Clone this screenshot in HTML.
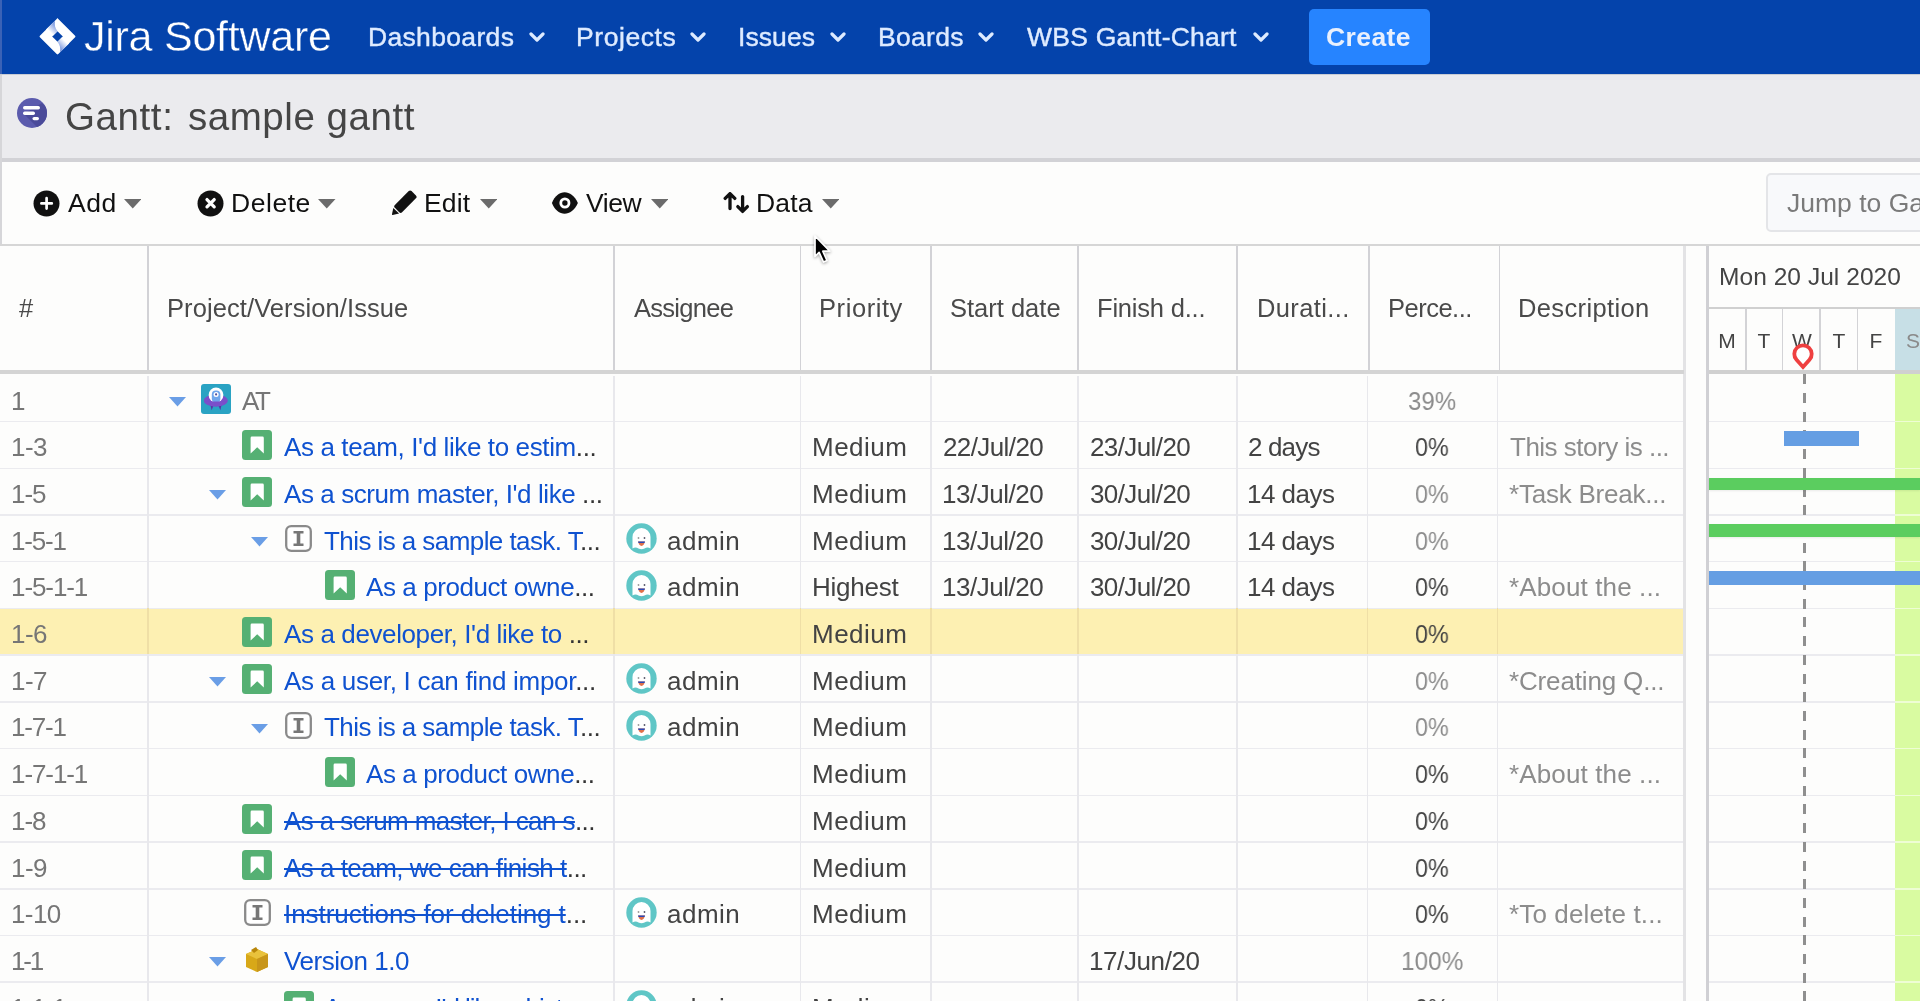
<!DOCTYPE html>
<html><head><meta charset="utf-8"><style>
html,body{margin:0;padding:0;width:1920px;height:1001px;overflow:hidden;background:#fdfdfc;font-family:"Liberation Sans", sans-serif;}
.t{position:absolute;white-space:nowrap;line-height:normal;font-family:"Liberation Sans", sans-serif;will-change:transform;}
.r{position:absolute;}
</style></head><body>
<div class="r" style="left:0px;top:0px;width:1920px;height:74px;background:#0443ab;"></div>
<div class="r" style="left:0px;top:0px;width:2px;height:74px;background:#3a62b6;"></div>
<div class="r" style="left:0px;top:74px;width:2px;height:172px;background:#d6d6d9;"></div>
<div class="r" style="left:0px;top:74px;width:1920px;height:1px;background:#c8ccd4;"></div>
<svg class="r" style="left:38px;top:17px" width="39" height="39" viewBox="0 0 39 39">
<defs>
<linearGradient id="lg1" gradientUnits="userSpaceOnUse" x1="18" y1="7" x2="11" y2="14"><stop offset="0" stop-color="#6f8fdc"/><stop offset="1" stop-color="#ffffff"/></linearGradient>
<linearGradient id="lg2" gradientUnits="userSpaceOnUse" x1="21" y1="32" x2="28" y2="25"><stop offset="0" stop-color="#6f8fdc"/><stop offset="1" stop-color="#ffffff"/></linearGradient>
</defs>
<path d="M19.5 1.1 Q19.5 1.1 20.3 1.9 L37.1 18.7 Q37.9 19.5 37.1 20.3 L20.3 37.1 Q19.5 37.9 18.7 37.1 L1.9 20.3 Q1.1 19.5 1.9 18.7 L18.7 1.9 Z" fill="#fff"/>
<path d="M19.5 14.2 L24.8 19.5 L19.5 24.8 L14.2 19.5 Z" fill="#0443ab"/>
<path d="M16.9 3.7 C16.4 8 17 11 19.5 14.2 L15 18.7 L8 12.6 Z" fill="url(#lg1)"/>
<path d="M22.1 35.3 C22.6 31 22 28 19.5 24.8 L24 20.3 L31 26.4 Z" fill="url(#lg2)"/>
</svg>
<div class="t" style="left:84.00px;top:12.09px;font-size:43px;color:#ffffff;font-weight:400;letter-spacing:-0.250px;-webkit-text-stroke:0.4px #0443ab">Jira Software</div>
<div class="t" style="left:368.00px;top:22.02px;font-size:26.5px;color:#deebff;font-weight:400;letter-spacing:0.333px;-webkit-text-stroke:0.4px #deebff">Dashboards</div>
<svg class="r" style="left:529px;top:32px" width="16" height="10" viewBox="0 0 16 10"><path d="M2 2 L8 8 L14 2" fill="none" stroke="#deebff" stroke-width="3.2" stroke-linecap="round" stroke-linejoin="round"/></svg>
<div class="t" style="left:576.00px;top:22.02px;font-size:26.5px;color:#deebff;font-weight:400;letter-spacing:0.571px;-webkit-text-stroke:0.4px #deebff">Projects</div>
<svg class="r" style="left:690px;top:32px" width="16" height="10" viewBox="0 0 16 10"><path d="M2 2 L8 8 L14 2" fill="none" stroke="#deebff" stroke-width="3.2" stroke-linecap="round" stroke-linejoin="round"/></svg>
<div class="t" style="left:738.30px;top:22.02px;font-size:26.5px;color:#deebff;font-weight:400;letter-spacing:0.080px;-webkit-text-stroke:0.4px #deebff">Issues</div>
<svg class="r" style="left:830px;top:32px" width="16" height="10" viewBox="0 0 16 10"><path d="M2 2 L8 8 L14 2" fill="none" stroke="#deebff" stroke-width="3.2" stroke-linecap="round" stroke-linejoin="round"/></svg>
<div class="t" style="left:878.00px;top:22.02px;font-size:26.5px;color:#deebff;font-weight:400;letter-spacing:0.300px;-webkit-text-stroke:0.4px #deebff">Boards</div>
<svg class="r" style="left:978px;top:32px" width="16" height="10" viewBox="0 0 16 10"><path d="M2 2 L8 8 L14 2" fill="none" stroke="#deebff" stroke-width="3.2" stroke-linecap="round" stroke-linejoin="round"/></svg>
<div class="t" style="left:1027.00px;top:22.02px;font-size:26.5px;color:#deebff;font-weight:400;letter-spacing:0.236px;-webkit-text-stroke:0.4px #deebff">WBS Gantt-Chart</div>
<svg class="r" style="left:1252.5px;top:32px" width="16" height="10" viewBox="0 0 16 10"><path d="M2 2 L8 8 L14 2" fill="none" stroke="#deebff" stroke-width="3.2" stroke-linecap="round" stroke-linejoin="round"/></svg>
<div class="r" style="left:1309px;top:9px;width:121px;height:56px;background:#2684ff;border-radius:5px"></div>
<div class="t" style="left:1326.00px;top:22.32px;font-size:26.5px;color:#e9f0fd;font-weight:700;letter-spacing:0.400px;">Create</div>
<div class="r" style="left:2px;top:75px;width:1918px;height:83px;background:#ebebee;"></div>
<div class="r" style="left:2px;top:158px;width:1918px;height:4px;background:#d2d2d6;"></div>
<svg class="r" style="left:16px;top:97px" width="32" height="32" viewBox="0 0 32 32">
<defs><clipPath id="cc"><circle cx="16" cy="16" r="15"/></clipPath></defs>
<circle cx="16" cy="16" r="15" fill="#5b5bad"/>
<path d="M8 17 L28 37 L40 20 L26 6 Z" fill="#4b4b9a" clip-path="url(#cc)"/>
<rect x="7" y="9" width="17" height="3.4" rx="1.7" fill="#fff"/>
<rect x="7" y="14.6" width="12" height="3.4" rx="1.7" fill="#fff"/>
<rect x="16.5" y="20" width="6.5" height="3.2" rx="1.6" fill="#fff"/>
</svg>
<div class="t" style="left:65.00px;top:94.66px;font-size:38.5px;color:#454545;font-weight:400;letter-spacing:0.600px;">Gantt:</div>
<div class="t" style="left:188.00px;top:94.66px;font-size:38.5px;color:#454545;font-weight:400;letter-spacing:0.545px;">sample gantt</div>
<div class="r" style="left:2px;top:162px;width:1918px;height:82px;background:#fdfdfc;"></div>
<div class="r" style="left:0px;top:244px;width:1920px;height:2px;background:#d6d6d6;"></div>
<svg class="r" style="left:33px;top:189.5px" width="27" height="27" viewBox="0 0 27 27"><circle cx="13.5" cy="13.5" r="13" fill="#111"/><path d="M13.6 8.2 V18.6 M8.4 13.4 H18.8" stroke="#fff" stroke-width="2.7" stroke-linecap="round"/></svg>
<div class="t" style="left:67.50px;top:188.02px;font-size:26.5px;color:#111111;font-weight:400;letter-spacing:0.500px;">Add</div>
<svg class="r" style="left:123.5px;top:199px" width="17.5" height="9.5" viewBox="0 0 17.5 9.5"><path d="M0 0 L17.5 0 L8.75 9.5 Z" fill="#6b6b6b"/></svg>
<svg class="r" style="left:197px;top:189.5px" width="27" height="27" viewBox="0 0 27 27"><circle cx="13.5" cy="13.5" r="13" fill="#111"/><path d="M10 9.6 L17.2 16.8 M17.2 9.6 L10 16.8" stroke="#fff" stroke-width="3.3" stroke-linecap="round"/></svg>
<div class="t" style="left:230.50px;top:188.02px;font-size:26.5px;color:#111111;font-weight:400;letter-spacing:0.540px;">Delete</div>
<svg class="r" style="left:318px;top:199px" width="17.5" height="9.5" viewBox="0 0 17.5 9.5"><path d="M0 0 L17.5 0 L8.75 9.5 Z" fill="#6b6b6b"/></svg>
<svg class="r" style="left:391px;top:190px" width="28" height="27" viewBox="0 0 28 27"><rect x="-11.8" y="-5.1" width="23.6" height="10.2" rx="2" fill="#111" transform="translate(14.4 11.65) rotate(-45)"/><path d="M2.3 17.9 L8.1 23.5 L1.6 24.9 Q0.9 25 1 24.3 Z" fill="#111"/></svg>
<div class="t" style="left:424.00px;top:188.02px;font-size:26.5px;color:#111111;font-weight:400;letter-spacing:0.167px;">Edit</div>
<svg class="r" style="left:479.5px;top:199px" width="17.5" height="9.5" viewBox="0 0 17.5 9.5"><path d="M0 0 L17.5 0 L8.75 9.5 Z" fill="#6b6b6b"/></svg>
<svg class="r" style="left:551px;top:191.5px" width="28" height="22" viewBox="0 0 28 22"><path d="M0.9 11 C6.5 -3.2 20.5 -3.2 26.9 11 C20.5 25.2 6.5 25.2 0.9 11 Z" fill="#111"/><circle cx="13.9" cy="11" r="5.5" fill="#fff"/><circle cx="13.9" cy="11" r="2.7" fill="#111"/></svg>
<div class="t" style="left:585.50px;top:188.02px;font-size:26.5px;color:#111111;font-weight:400;letter-spacing:-0.433px;">View</div>
<svg class="r" style="left:650.5px;top:199px" width="17.5" height="9.5" viewBox="0 0 17.5 9.5"><path d="M0 0 L17.5 0 L8.75 9.5 Z" fill="#6b6b6b"/></svg>
<svg class="r" style="left:723px;top:192px" width="28" height="23" viewBox="0 0 28 23"><path d="M7 2 V16.6 M2.2 6.4 L7 1.6 L11.8 6.4" fill="none" stroke="#111" stroke-width="3.3" stroke-linecap="round" stroke-linejoin="round"/><path d="M19.6 4.6 V18.8 M14.8 14.6 L19.6 19.4 L24.4 14.6" fill="none" stroke="#111" stroke-width="3.3" stroke-linecap="round" stroke-linejoin="round"/></svg>
<div class="t" style="left:756.00px;top:188.02px;font-size:26.5px;color:#111111;font-weight:400;letter-spacing:0.167px;">Data</div>
<svg class="r" style="left:821.5px;top:199px" width="17.5" height="9.5" viewBox="0 0 17.5 9.5"><path d="M0 0 L17.5 0 L8.75 9.5 Z" fill="#6b6b6b"/></svg>
<div class="r" style="left:1766px;top:173px;width:170px;height:59px;background:#f8f9fb;border:2px solid #e4e5e8;border-radius:5px;box-sizing:border-box"></div>
<div class="t" style="left:1787.00px;top:188.02px;font-size:26.5px;color:#7a7a7a;font-weight:400;letter-spacing:0.000px;">Jump to Gantt</div>
<div class="r" style="left:0px;top:246px;width:1683px;height:124px;background:#fdfdfc;"></div>
<div class="r" style="left:147.25px;top:246px;width:1.5px;height:125px;background:#d2d2d6;"></div>
<div class="r" style="left:613.25px;top:246px;width:1.5px;height:125px;background:#d2d2d6;"></div>
<div class="r" style="left:799.95px;top:246px;width:1.5px;height:125px;background:#d2d2d6;"></div>
<div class="r" style="left:930.25px;top:246px;width:1.5px;height:125px;background:#d2d2d6;"></div>
<div class="r" style="left:1077.45px;top:246px;width:1.5px;height:125px;background:#d2d2d6;"></div>
<div class="r" style="left:1236.25px;top:246px;width:1.5px;height:125px;background:#d2d2d6;"></div>
<div class="r" style="left:1368.15px;top:246px;width:1.5px;height:125px;background:#d2d2d6;"></div>
<div class="r" style="left:1498.95px;top:246px;width:1.5px;height:125px;background:#d2d2d6;"></div>
<div class="r" style="left:1683px;top:246px;width:3px;height:755px;background:#e3e3e5;"></div>
<div class="r" style="left:1686px;top:246px;width:20px;height:755px;background:#fdfdfc;"></div>
<div class="r" style="left:1706px;top:246px;width:3px;height:755px;background:#d0d0d4;"></div>
<div class="r" style="left:0px;top:370px;width:1684px;height:4px;background:#d4d4d4;"></div>
<div class="t" style="left:18.75px;top:293.92px;font-size:25.5px;color:#4a4a4a;font-weight:400;letter-spacing:0.000px;">#</div>
<div class="t" style="left:166.75px;top:293.92px;font-size:25.5px;color:#4a4a4a;font-weight:400;letter-spacing:0.087px;">Project/Version/Issue</div>
<div class="t" style="left:634.00px;top:293.92px;font-size:25.5px;color:#4a4a4a;font-weight:400;letter-spacing:-0.714px;">Assignee</div>
<div class="t" style="left:818.70px;top:293.92px;font-size:25.5px;color:#4a4a4a;font-weight:400;letter-spacing:0.571px;">Priority</div>
<div class="t" style="left:950.00px;top:293.92px;font-size:25.5px;color:#4a4a4a;font-weight:400;letter-spacing:0.000px;">Start date</div>
<div class="t" style="left:1097.00px;top:293.92px;font-size:25.5px;color:#4a4a4a;font-weight:400;letter-spacing:-0.200px;">Finish d...</div>
<div class="t" style="left:1257.00px;top:293.92px;font-size:25.5px;color:#4a4a4a;font-weight:400;letter-spacing:0.375px;">Durati...</div>
<div class="t" style="left:1387.50px;top:293.92px;font-size:25.5px;color:#4a4a4a;font-weight:400;letter-spacing:-0.500px;">Perce...</div>
<div class="t" style="left:1517.70px;top:293.92px;font-size:25.5px;color:#4a4a4a;font-weight:400;letter-spacing:0.360px;">Description</div>
<div class="r" style="left:1709px;top:246px;width:211px;height:124px;background:#fdfdfc;"></div>
<div class="t" style="left:1719.30px;top:262.58px;font-size:24.5px;color:#444;font-weight:400;letter-spacing:0.050px;">Mon 20 Jul 2020</div>
<div class="r" style="left:1709px;top:307px;width:211px;height:2px;background:#d0d0d0;"></div>
<div class="r" style="left:1894.5px;top:309px;width:30px;height:61px;background:#c7dfe6;"></div>
<div class="r" style="left:1745.05px;top:309px;width:1.5px;height:62px;background:#d3d3d6;"></div>
<div class="r" style="left:1781.95px;top:309px;width:1.5px;height:62px;background:#d3d3d6;"></div>
<div class="r" style="left:1819.35px;top:309px;width:1.5px;height:62px;background:#d3d3d6;"></div>
<div class="r" style="left:1856.85px;top:309px;width:1.5px;height:62px;background:#d3d3d6;"></div>
<div class="t" style="left:1707px;width:40px;text-align:center;top:329.00px;font-size:21px;color:#444">M</div>
<div class="t" style="left:1744px;width:40px;text-align:center;top:329.00px;font-size:21px;color:#444">T</div>
<div class="t" style="left:1781.5px;width:40px;text-align:center;top:329.00px;font-size:21px;color:#444">W</div>
<div class="t" style="left:1818.5px;width:40px;text-align:center;top:329.00px;font-size:21px;color:#444">T</div>
<div class="t" style="left:1856px;width:40px;text-align:center;top:329.00px;font-size:21px;color:#444">F</div>
<div class="t" style="left:1893px;width:40px;text-align:center;top:329.00px;font-size:21px;color:#8a8a8a">S</div>
<div class="r" style="left:1709px;top:370px;width:211px;height:4px;background:#d0d0d0;"></div>
<div class="r" style="left:0px;top:420.82000000000005px;width:1683px;height:1.5px;background:#ebebef;"></div>
<div class="r" style="left:1709px;top:420.82000000000005px;width:211px;height:1.5px;background:#ebebef;"></div>
<div class="r" style="left:147.25px;top:376px;width:1.5px;height:44.72px;background:#e8e8ec;"></div>
<div class="r" style="left:613.25px;top:376px;width:1.5px;height:44.72px;background:#e8e8ec;"></div>
<div class="r" style="left:799.95px;top:376px;width:1.5px;height:44.72px;background:#e8e8ec;"></div>
<div class="r" style="left:930.25px;top:376px;width:1.5px;height:44.72px;background:#e8e8ec;"></div>
<div class="r" style="left:1077.25px;top:376px;width:1.5px;height:44.72px;background:#e8e8ec;"></div>
<div class="r" style="left:1236.25px;top:376px;width:1.5px;height:44.72px;background:#e8e8ec;"></div>
<div class="r" style="left:1366.55px;top:376px;width:1.5px;height:44.72px;background:#e8e8ec;"></div>
<div class="r" style="left:1496.75px;top:376px;width:1.5px;height:44.72px;background:#e8e8ec;"></div>
<div class="t" style="left:10.80px;top:385.62px;font-size:26px;color:#767676;font-weight:400;letter-spacing:0.000px;">1</div>
<svg class="r" style="left:168.7px;top:396.7px" width="17" height="10" viewBox="0 0 17 10"><path d="M0 0 L17 0 L8.5 9.5 Z" fill="#6a9ee6"/></svg>
<svg class="r" style="left:201.3px;top:383.5px" width="30" height="30" viewBox="0 0 30 30"><defs><clipPath id="pc"><rect x="0" y="17.6" width="30" height="13"/></clipPath></defs><rect width="30" height="30" rx="3" fill="#2aa3c3"/><path d="M9.2 20 L10.6 26.2 L12.8 21 Z M17.2 21 L19.4 26.2 L20.8 20 Z" fill="#5538a8"/><ellipse cx="14.8" cy="16.6" rx="11.9" ry="6" fill="#7b4fca"/><circle cx="15" cy="11" r="7.4" fill="#fff"/><rect x="10.8" y="6.6" width="8.6" height="12" rx="4" fill="#6fa6ec"/><circle cx="15.1" cy="10.4" r="2.5" fill="#fff"/><circle cx="15.1" cy="10.4" r="1.1" fill="#5050a0"/><ellipse cx="14.8" cy="16.6" rx="11.9" ry="6" fill="#7b4fca" clip-path="url(#pc)"/></svg>
<div class="t" style="left:242.00px;top:385.62px;font-size:26px;color:#767676;font-weight:400;letter-spacing:-2.300px;"><span style="">AT</span></div>
<div class="t" style="left:1408.48px;top:385.62px;font-size:26px;color:#8c8c8c;font-weight:400;transform:scaleX(0.9240);transform-origin:0 0;">39%</div>
<div class="r" style="left:0px;top:467.5400000000001px;width:1683px;height:1.5px;background:#ebebef;"></div>
<div class="r" style="left:1709px;top:467.5400000000001px;width:211px;height:1.5px;background:#ebebef;"></div>
<div class="r" style="left:147.25px;top:420.72px;width:1.5px;height:46.72px;background:#e8e8ec;"></div>
<div class="r" style="left:613.25px;top:420.72px;width:1.5px;height:46.72px;background:#e8e8ec;"></div>
<div class="r" style="left:799.95px;top:420.72px;width:1.5px;height:46.72px;background:#e8e8ec;"></div>
<div class="r" style="left:930.25px;top:420.72px;width:1.5px;height:46.72px;background:#e8e8ec;"></div>
<div class="r" style="left:1077.25px;top:420.72px;width:1.5px;height:46.72px;background:#e8e8ec;"></div>
<div class="r" style="left:1236.25px;top:420.72px;width:1.5px;height:46.72px;background:#e8e8ec;"></div>
<div class="r" style="left:1366.55px;top:420.72px;width:1.5px;height:46.72px;background:#e8e8ec;"></div>
<div class="r" style="left:1496.75px;top:420.72px;width:1.5px;height:46.72px;background:#e8e8ec;"></div>
<div class="t" style="left:10.80px;top:432.31px;font-size:26px;color:#767676;font-weight:400;letter-spacing:-0.550px;">1-3</div>
<svg class="r" style="left:242.2px;top:429.92px" width="30" height="30" viewBox="0 0 30 30"><rect x="0" y="0" width="30" height="30" rx="3.5" fill="#55b073"/><path d="M8.6 7.9 Q8.6 6.6 9.9 6.6 H20.5 Q21.8 6.6 21.8 7.9 V23.6 L15.2 17.3 L8.6 23.6 Z" fill="#fff"/></svg>
<div class="t" style="left:283.60px;top:432.31px;font-size:26px;color:#0f52d0;font-weight:400;letter-spacing:-0.387px;"><span style="">As a team, I'd like to estim</span><span style="color:#333333">...</span></div>
<div class="t" style="left:811.80px;top:432.31px;font-size:26px;color:#434343;font-weight:400;letter-spacing:0.480px;">Medium</div>
<div class="t" style="left:943.20px;top:432.31px;font-size:26px;color:#434343;font-weight:400;letter-spacing:-0.600px;">22/Jul/20</div>
<div class="t" style="left:1090.00px;top:432.31px;font-size:26px;color:#434343;font-weight:400;letter-spacing:-0.600px;">23/Jul/20</div>
<div class="t" style="left:1248.20px;top:432.31px;font-size:26px;color:#434343;font-weight:400;letter-spacing:-0.840px;">2 days</div>
<div class="t" style="left:1415.45px;top:432.31px;font-size:26px;color:#434343;font-weight:400;transform:scaleX(0.8972);transform-origin:0 0;">0%</div>
<div class="t" style="left:1510.00px;top:432.31px;font-size:26px;color:#8c8c8c;font-weight:400;letter-spacing:-0.500px;">This story is ...</div>
<div class="r" style="left:0px;top:514.26px;width:1683px;height:1.5px;background:#ebebef;"></div>
<div class="r" style="left:1709px;top:514.26px;width:211px;height:1.5px;background:#ebebef;"></div>
<div class="r" style="left:147.25px;top:467.44px;width:1.5px;height:46.72px;background:#e8e8ec;"></div>
<div class="r" style="left:613.25px;top:467.44px;width:1.5px;height:46.72px;background:#e8e8ec;"></div>
<div class="r" style="left:799.95px;top:467.44px;width:1.5px;height:46.72px;background:#e8e8ec;"></div>
<div class="r" style="left:930.25px;top:467.44px;width:1.5px;height:46.72px;background:#e8e8ec;"></div>
<div class="r" style="left:1077.25px;top:467.44px;width:1.5px;height:46.72px;background:#e8e8ec;"></div>
<div class="r" style="left:1236.25px;top:467.44px;width:1.5px;height:46.72px;background:#e8e8ec;"></div>
<div class="r" style="left:1366.55px;top:467.44px;width:1.5px;height:46.72px;background:#e8e8ec;"></div>
<div class="r" style="left:1496.75px;top:467.44px;width:1.5px;height:46.72px;background:#e8e8ec;"></div>
<div class="t" style="left:10.80px;top:479.00px;font-size:26px;color:#767676;font-weight:400;letter-spacing:-1.050px;">1-5</div>
<svg class="r" style="left:209.4px;top:490.14px" width="17" height="10" viewBox="0 0 17 10"><path d="M0 0 L17 0 L8.5 9.5 Z" fill="#6a9ee6"/></svg>
<svg class="r" style="left:242.2px;top:476.64px" width="30" height="30" viewBox="0 0 30 30"><rect x="0" y="0" width="30" height="30" rx="3.5" fill="#55b073"/><path d="M8.6 7.9 Q8.6 6.6 9.9 6.6 H20.5 Q21.8 6.6 21.8 7.9 V23.6 L15.2 17.3 L8.6 23.6 Z" fill="#fff"/></svg>
<div class="t" style="left:283.60px;top:479.00px;font-size:26px;color:#0f52d0;font-weight:400;letter-spacing:-0.420px;"><span style="">As a scrum master, I'd like </span><span style="color:#333333">...</span></div>
<div class="t" style="left:811.80px;top:479.00px;font-size:26px;color:#434343;font-weight:400;letter-spacing:0.480px;">Medium</div>
<div class="t" style="left:942.20px;top:479.00px;font-size:26px;color:#434343;font-weight:400;letter-spacing:-0.475px;">13/Jul/20</div>
<div class="t" style="left:1090.00px;top:479.00px;font-size:26px;color:#434343;font-weight:400;letter-spacing:-0.600px;">30/Jul/20</div>
<div class="t" style="left:1247.20px;top:479.00px;font-size:26px;color:#434343;font-weight:400;letter-spacing:-0.517px;">14 days</div>
<div class="t" style="left:1415.45px;top:479.00px;font-size:26px;color:#8c8c8c;font-weight:400;transform:scaleX(0.8972);transform-origin:0 0;">0%</div>
<div class="t" style="left:1509.00px;top:479.00px;font-size:26px;color:#8c8c8c;font-weight:400;letter-spacing:-0.231px;">*Task Break...</div>
<div class="r" style="left:0px;top:560.98px;width:1683px;height:1.5px;background:#ebebef;"></div>
<div class="r" style="left:1709px;top:560.98px;width:211px;height:1.5px;background:#ebebef;"></div>
<div class="r" style="left:147.25px;top:514.16px;width:1.5px;height:46.72px;background:#e8e8ec;"></div>
<div class="r" style="left:613.25px;top:514.16px;width:1.5px;height:46.72px;background:#e8e8ec;"></div>
<div class="r" style="left:799.95px;top:514.16px;width:1.5px;height:46.72px;background:#e8e8ec;"></div>
<div class="r" style="left:930.25px;top:514.16px;width:1.5px;height:46.72px;background:#e8e8ec;"></div>
<div class="r" style="left:1077.25px;top:514.16px;width:1.5px;height:46.72px;background:#e8e8ec;"></div>
<div class="r" style="left:1236.25px;top:514.16px;width:1.5px;height:46.72px;background:#e8e8ec;"></div>
<div class="r" style="left:1366.55px;top:514.16px;width:1.5px;height:46.72px;background:#e8e8ec;"></div>
<div class="r" style="left:1496.75px;top:514.16px;width:1.5px;height:46.72px;background:#e8e8ec;"></div>
<div class="t" style="left:10.80px;top:525.69px;font-size:26px;color:#767676;font-weight:400;letter-spacing:-1.200px;">1-5-1</div>
<svg class="r" style="left:250.6px;top:536.86px" width="17" height="10" viewBox="0 0 17 10"><path d="M0 0 L17 0 L8.5 9.5 Z" fill="#6a9ee6"/></svg>
<svg class="r" style="left:285.2px;top:525.4599999999999px" width="27" height="27" viewBox="0 0 27 27"><rect x="1.2" y="1.2" width="24.6" height="24.6" rx="5" fill="#fff" stroke="#8a8a8a" stroke-width="2.3"/><path d="M8.5 7.2 H18.5 M8.5 19.8 H18.5" stroke="#777" stroke-width="2.6"/><path d="M13.5 7 V20" stroke="#777" stroke-width="3.6"/></svg>
<div class="t" style="left:324.40px;top:525.69px;font-size:26px;color:#0f52d0;font-weight:400;letter-spacing:-0.569px;"><span style="">This is a sample task. T</span><span style="color:#333333">...</span></div>
<svg class="r" style="left:625.8px;top:522.9599999999999px" width="31" height="31" viewBox="0 0 31 31"><circle cx="15.5" cy="15.5" r="15.2" fill="#5fc6c6"/><path d="M6.5 25.5 V14 A9 9 0 0 1 24.5 14 V25.5 Q21.5 23.5 18.5 25.5 Q15.5 27 12.5 25.5 Q9.5 23.5 6.5 25.5 Z" fill="#fff"/><circle cx="12.5" cy="15" r="0.9" fill="#999"/><circle cx="18.5" cy="15" r="0.9" fill="#556"/><path d="M12 18.5 H19 Q18 22.5 15.5 23 Q13 22.5 12 18.5 Z" fill="#e0704a"/><path d="M12 18.5 H19 L18.5 20 H12.5 Z" fill="#2848b8"/></svg>
<div class="t" style="left:667.00px;top:525.69px;font-size:26px;color:#434343;font-weight:400;letter-spacing:0.500px;">admin</div>
<div class="t" style="left:811.80px;top:525.69px;font-size:26px;color:#434343;font-weight:400;letter-spacing:0.480px;">Medium</div>
<div class="t" style="left:942.20px;top:525.69px;font-size:26px;color:#434343;font-weight:400;letter-spacing:-0.475px;">13/Jul/20</div>
<div class="t" style="left:1090.00px;top:525.69px;font-size:26px;color:#434343;font-weight:400;letter-spacing:-0.600px;">30/Jul/20</div>
<div class="t" style="left:1247.20px;top:525.69px;font-size:26px;color:#434343;font-weight:400;letter-spacing:-0.517px;">14 days</div>
<div class="t" style="left:1415.45px;top:525.69px;font-size:26px;color:#8c8c8c;font-weight:400;transform:scaleX(0.8972);transform-origin:0 0;">0%</div>
<div class="r" style="left:0px;top:607.7px;width:1683px;height:1.5px;background:#ebebef;"></div>
<div class="r" style="left:1709px;top:607.7px;width:211px;height:1.5px;background:#ebebef;"></div>
<div class="r" style="left:147.25px;top:560.88px;width:1.5px;height:46.72px;background:#e8e8ec;"></div>
<div class="r" style="left:613.25px;top:560.88px;width:1.5px;height:46.72px;background:#e8e8ec;"></div>
<div class="r" style="left:799.95px;top:560.88px;width:1.5px;height:46.72px;background:#e8e8ec;"></div>
<div class="r" style="left:930.25px;top:560.88px;width:1.5px;height:46.72px;background:#e8e8ec;"></div>
<div class="r" style="left:1077.25px;top:560.88px;width:1.5px;height:46.72px;background:#e8e8ec;"></div>
<div class="r" style="left:1236.25px;top:560.88px;width:1.5px;height:46.72px;background:#e8e8ec;"></div>
<div class="r" style="left:1366.55px;top:560.88px;width:1.5px;height:46.72px;background:#e8e8ec;"></div>
<div class="r" style="left:1496.75px;top:560.88px;width:1.5px;height:46.72px;background:#e8e8ec;"></div>
<div class="t" style="left:10.80px;top:572.38px;font-size:26px;color:#767676;font-weight:400;letter-spacing:-1.083px;">1-5-1-1</div>
<svg class="r" style="left:324.5px;top:570.08px" width="30" height="30" viewBox="0 0 30 30"><rect x="0" y="0" width="30" height="30" rx="3.5" fill="#55b073"/><path d="M8.6 7.9 Q8.6 6.6 9.9 6.6 H20.5 Q21.8 6.6 21.8 7.9 V23.6 L15.2 17.3 L8.6 23.6 Z" fill="#fff"/></svg>
<div class="t" style="left:366.00px;top:572.38px;font-size:26px;color:#0f52d0;font-weight:400;letter-spacing:-0.421px;"><span style="">As a product owne</span><span style="color:#333333">...</span></div>
<svg class="r" style="left:625.8px;top:569.68px" width="31" height="31" viewBox="0 0 31 31"><circle cx="15.5" cy="15.5" r="15.2" fill="#5fc6c6"/><path d="M6.5 25.5 V14 A9 9 0 0 1 24.5 14 V25.5 Q21.5 23.5 18.5 25.5 Q15.5 27 12.5 25.5 Q9.5 23.5 6.5 25.5 Z" fill="#fff"/><circle cx="12.5" cy="15" r="0.9" fill="#999"/><circle cx="18.5" cy="15" r="0.9" fill="#556"/><path d="M12 18.5 H19 Q18 22.5 15.5 23 Q13 22.5 12 18.5 Z" fill="#e0704a"/><path d="M12 18.5 H19 L18.5 20 H12.5 Z" fill="#2848b8"/></svg>
<div class="t" style="left:667.00px;top:572.38px;font-size:26px;color:#434343;font-weight:400;letter-spacing:0.500px;">admin</div>
<div class="t" style="left:811.80px;top:572.38px;font-size:26px;color:#434343;font-weight:400;letter-spacing:-0.250px;">Highest</div>
<div class="t" style="left:942.20px;top:572.38px;font-size:26px;color:#434343;font-weight:400;letter-spacing:-0.475px;">13/Jul/20</div>
<div class="t" style="left:1090.00px;top:572.38px;font-size:26px;color:#434343;font-weight:400;letter-spacing:-0.600px;">30/Jul/20</div>
<div class="t" style="left:1247.20px;top:572.38px;font-size:26px;color:#434343;font-weight:400;letter-spacing:-0.517px;">14 days</div>
<div class="t" style="left:1415.45px;top:572.38px;font-size:26px;color:#434343;font-weight:400;transform:scaleX(0.8972);transform-origin:0 0;">0%</div>
<div class="t" style="left:1509.00px;top:572.38px;font-size:26px;color:#8c8c8c;font-weight:400;letter-spacing:0.131px;">*About the ...</div>
<div class="r" style="left:0px;top:609.4px;width:1683px;height:45.12px;background:#fdf0b2;"></div>
<div class="r" style="left:0px;top:654.4200000000001px;width:1683px;height:1.5px;background:#ebebef;"></div>
<div class="r" style="left:1709px;top:654.4200000000001px;width:211px;height:1.5px;background:#ebebef;"></div>
<div class="r" style="left:147.25px;top:607.6px;width:1.5px;height:46.72px;background:#efdfa6;"></div>
<div class="r" style="left:613.25px;top:607.6px;width:1.5px;height:46.72px;background:#efdfa6;"></div>
<div class="r" style="left:799.95px;top:607.6px;width:1.5px;height:46.72px;background:#efdfa6;"></div>
<div class="r" style="left:930.25px;top:607.6px;width:1.5px;height:46.72px;background:#efdfa6;"></div>
<div class="r" style="left:1077.25px;top:607.6px;width:1.5px;height:46.72px;background:#efdfa6;"></div>
<div class="r" style="left:1236.25px;top:607.6px;width:1.5px;height:46.72px;background:#efdfa6;"></div>
<div class="r" style="left:1366.55px;top:607.6px;width:1.5px;height:46.72px;background:#efdfa6;"></div>
<div class="r" style="left:1496.75px;top:607.6px;width:1.5px;height:46.72px;background:#efdfa6;"></div>
<div class="t" style="left:10.80px;top:619.07px;font-size:26px;color:#767676;font-weight:400;letter-spacing:-0.500px;">1-6</div>
<svg class="r" style="left:242.2px;top:616.8000000000001px" width="30" height="30" viewBox="0 0 30 30"><rect x="0" y="0" width="30" height="30" rx="3.5" fill="#55b073"/><path d="M8.6 7.9 Q8.6 6.6 9.9 6.6 H20.5 Q21.8 6.6 21.8 7.9 V23.6 L15.2 17.3 L8.6 23.6 Z" fill="#fff"/></svg>
<div class="t" style="left:283.60px;top:619.07px;font-size:26px;color:#0f52d0;font-weight:400;letter-spacing:-0.387px;"><span style="">As a developer, I'd like to </span><span style="color:#333333">...</span></div>
<div class="t" style="left:811.80px;top:619.07px;font-size:26px;color:#434343;font-weight:400;letter-spacing:0.480px;">Medium</div>
<div class="t" style="left:1415.45px;top:619.07px;font-size:26px;color:#434343;font-weight:400;transform:scaleX(0.8972);transform-origin:0 0;">0%</div>
<div class="r" style="left:0px;top:701.14px;width:1683px;height:1.5px;background:#ebebef;"></div>
<div class="r" style="left:1709px;top:701.14px;width:211px;height:1.5px;background:#ebebef;"></div>
<div class="r" style="left:147.25px;top:654.3199999999999px;width:1.5px;height:46.72px;background:#e8e8ec;"></div>
<div class="r" style="left:613.25px;top:654.3199999999999px;width:1.5px;height:46.72px;background:#e8e8ec;"></div>
<div class="r" style="left:799.95px;top:654.3199999999999px;width:1.5px;height:46.72px;background:#e8e8ec;"></div>
<div class="r" style="left:930.25px;top:654.3199999999999px;width:1.5px;height:46.72px;background:#e8e8ec;"></div>
<div class="r" style="left:1077.25px;top:654.3199999999999px;width:1.5px;height:46.72px;background:#e8e8ec;"></div>
<div class="r" style="left:1236.25px;top:654.3199999999999px;width:1.5px;height:46.72px;background:#e8e8ec;"></div>
<div class="r" style="left:1366.55px;top:654.3199999999999px;width:1.5px;height:46.72px;background:#e8e8ec;"></div>
<div class="r" style="left:1496.75px;top:654.3199999999999px;width:1.5px;height:46.72px;background:#e8e8ec;"></div>
<div class="t" style="left:10.80px;top:665.76px;font-size:26px;color:#767676;font-weight:400;letter-spacing:-0.550px;">1-7</div>
<svg class="r" style="left:209.4px;top:677.02px" width="17" height="10" viewBox="0 0 17 10"><path d="M0 0 L17 0 L8.5 9.5 Z" fill="#6a9ee6"/></svg>
<svg class="r" style="left:242.2px;top:663.52px" width="30" height="30" viewBox="0 0 30 30"><rect x="0" y="0" width="30" height="30" rx="3.5" fill="#55b073"/><path d="M8.6 7.9 Q8.6 6.6 9.9 6.6 H20.5 Q21.8 6.6 21.8 7.9 V23.6 L15.2 17.3 L8.6 23.6 Z" fill="#fff"/></svg>
<div class="t" style="left:283.60px;top:665.76px;font-size:26px;color:#0f52d0;font-weight:400;letter-spacing:-0.297px;"><span style="">As a user, I can find impor</span><span style="color:#333333">...</span></div>
<svg class="r" style="left:625.8px;top:663.1199999999999px" width="31" height="31" viewBox="0 0 31 31"><circle cx="15.5" cy="15.5" r="15.2" fill="#5fc6c6"/><path d="M6.5 25.5 V14 A9 9 0 0 1 24.5 14 V25.5 Q21.5 23.5 18.5 25.5 Q15.5 27 12.5 25.5 Q9.5 23.5 6.5 25.5 Z" fill="#fff"/><circle cx="12.5" cy="15" r="0.9" fill="#999"/><circle cx="18.5" cy="15" r="0.9" fill="#556"/><path d="M12 18.5 H19 Q18 22.5 15.5 23 Q13 22.5 12 18.5 Z" fill="#e0704a"/><path d="M12 18.5 H19 L18.5 20 H12.5 Z" fill="#2848b8"/></svg>
<div class="t" style="left:667.00px;top:665.76px;font-size:26px;color:#434343;font-weight:400;letter-spacing:0.500px;">admin</div>
<div class="t" style="left:811.80px;top:665.76px;font-size:26px;color:#434343;font-weight:400;letter-spacing:0.480px;">Medium</div>
<div class="t" style="left:1415.45px;top:665.76px;font-size:26px;color:#8c8c8c;font-weight:400;transform:scaleX(0.8972);transform-origin:0 0;">0%</div>
<div class="t" style="left:1509.00px;top:665.76px;font-size:26px;color:#8c8c8c;font-weight:400;letter-spacing:-0.154px;">*Creating Q...</div>
<div class="r" style="left:0px;top:747.86px;width:1683px;height:1.5px;background:#ebebef;"></div>
<div class="r" style="left:1709px;top:747.86px;width:211px;height:1.5px;background:#ebebef;"></div>
<div class="r" style="left:147.25px;top:701.04px;width:1.5px;height:46.72px;background:#e8e8ec;"></div>
<div class="r" style="left:613.25px;top:701.04px;width:1.5px;height:46.72px;background:#e8e8ec;"></div>
<div class="r" style="left:799.95px;top:701.04px;width:1.5px;height:46.72px;background:#e8e8ec;"></div>
<div class="r" style="left:930.25px;top:701.04px;width:1.5px;height:46.72px;background:#e8e8ec;"></div>
<div class="r" style="left:1077.25px;top:701.04px;width:1.5px;height:46.72px;background:#e8e8ec;"></div>
<div class="r" style="left:1236.25px;top:701.04px;width:1.5px;height:46.72px;background:#e8e8ec;"></div>
<div class="r" style="left:1366.55px;top:701.04px;width:1.5px;height:46.72px;background:#e8e8ec;"></div>
<div class="r" style="left:1496.75px;top:701.04px;width:1.5px;height:46.72px;background:#e8e8ec;"></div>
<div class="t" style="left:10.80px;top:712.45px;font-size:26px;color:#767676;font-weight:400;letter-spacing:-1.200px;">1-7-1</div>
<svg class="r" style="left:250.6px;top:723.74px" width="17" height="10" viewBox="0 0 17 10"><path d="M0 0 L17 0 L8.5 9.5 Z" fill="#6a9ee6"/></svg>
<svg class="r" style="left:285.2px;top:712.3399999999999px" width="27" height="27" viewBox="0 0 27 27"><rect x="1.2" y="1.2" width="24.6" height="24.6" rx="5" fill="#fff" stroke="#8a8a8a" stroke-width="2.3"/><path d="M8.5 7.2 H18.5 M8.5 19.8 H18.5" stroke="#777" stroke-width="2.6"/><path d="M13.5 7 V20" stroke="#777" stroke-width="3.6"/></svg>
<div class="t" style="left:324.40px;top:712.45px;font-size:26px;color:#0f52d0;font-weight:400;letter-spacing:-0.569px;"><span style="">This is a sample task. T</span><span style="color:#333333">...</span></div>
<svg class="r" style="left:625.8px;top:709.8399999999999px" width="31" height="31" viewBox="0 0 31 31"><circle cx="15.5" cy="15.5" r="15.2" fill="#5fc6c6"/><path d="M6.5 25.5 V14 A9 9 0 0 1 24.5 14 V25.5 Q21.5 23.5 18.5 25.5 Q15.5 27 12.5 25.5 Q9.5 23.5 6.5 25.5 Z" fill="#fff"/><circle cx="12.5" cy="15" r="0.9" fill="#999"/><circle cx="18.5" cy="15" r="0.9" fill="#556"/><path d="M12 18.5 H19 Q18 22.5 15.5 23 Q13 22.5 12 18.5 Z" fill="#e0704a"/><path d="M12 18.5 H19 L18.5 20 H12.5 Z" fill="#2848b8"/></svg>
<div class="t" style="left:667.00px;top:712.45px;font-size:26px;color:#434343;font-weight:400;letter-spacing:0.500px;">admin</div>
<div class="t" style="left:811.80px;top:712.45px;font-size:26px;color:#434343;font-weight:400;letter-spacing:0.480px;">Medium</div>
<div class="t" style="left:1415.45px;top:712.45px;font-size:26px;color:#8c8c8c;font-weight:400;transform:scaleX(0.8972);transform-origin:0 0;">0%</div>
<div class="r" style="left:0px;top:794.58px;width:1683px;height:1.5px;background:#ebebef;"></div>
<div class="r" style="left:1709px;top:794.58px;width:211px;height:1.5px;background:#ebebef;"></div>
<div class="r" style="left:147.25px;top:747.76px;width:1.5px;height:46.72px;background:#e8e8ec;"></div>
<div class="r" style="left:613.25px;top:747.76px;width:1.5px;height:46.72px;background:#e8e8ec;"></div>
<div class="r" style="left:799.95px;top:747.76px;width:1.5px;height:46.72px;background:#e8e8ec;"></div>
<div class="r" style="left:930.25px;top:747.76px;width:1.5px;height:46.72px;background:#e8e8ec;"></div>
<div class="r" style="left:1077.25px;top:747.76px;width:1.5px;height:46.72px;background:#e8e8ec;"></div>
<div class="r" style="left:1236.25px;top:747.76px;width:1.5px;height:46.72px;background:#e8e8ec;"></div>
<div class="r" style="left:1366.55px;top:747.76px;width:1.5px;height:46.72px;background:#e8e8ec;"></div>
<div class="r" style="left:1496.75px;top:747.76px;width:1.5px;height:46.72px;background:#e8e8ec;"></div>
<div class="t" style="left:10.80px;top:759.14px;font-size:26px;color:#767676;font-weight:400;letter-spacing:-1.083px;">1-7-1-1</div>
<svg class="r" style="left:324.5px;top:756.96px" width="30" height="30" viewBox="0 0 30 30"><rect x="0" y="0" width="30" height="30" rx="3.5" fill="#55b073"/><path d="M8.6 7.9 Q8.6 6.6 9.9 6.6 H20.5 Q21.8 6.6 21.8 7.9 V23.6 L15.2 17.3 L8.6 23.6 Z" fill="#fff"/></svg>
<div class="t" style="left:366.00px;top:759.14px;font-size:26px;color:#0f52d0;font-weight:400;letter-spacing:-0.421px;"><span style="">As a product owne</span><span style="color:#333333">...</span></div>
<div class="t" style="left:811.80px;top:759.14px;font-size:26px;color:#434343;font-weight:400;letter-spacing:0.480px;">Medium</div>
<div class="t" style="left:1415.45px;top:759.14px;font-size:26px;color:#434343;font-weight:400;transform:scaleX(0.8972);transform-origin:0 0;">0%</div>
<div class="t" style="left:1509.00px;top:759.14px;font-size:26px;color:#8c8c8c;font-weight:400;letter-spacing:0.131px;">*About the ...</div>
<div class="r" style="left:0px;top:841.3000000000001px;width:1683px;height:1.5px;background:#ebebef;"></div>
<div class="r" style="left:1709px;top:841.3000000000001px;width:211px;height:1.5px;background:#ebebef;"></div>
<div class="r" style="left:147.25px;top:794.48px;width:1.5px;height:46.72px;background:#e8e8ec;"></div>
<div class="r" style="left:613.25px;top:794.48px;width:1.5px;height:46.72px;background:#e8e8ec;"></div>
<div class="r" style="left:799.95px;top:794.48px;width:1.5px;height:46.72px;background:#e8e8ec;"></div>
<div class="r" style="left:930.25px;top:794.48px;width:1.5px;height:46.72px;background:#e8e8ec;"></div>
<div class="r" style="left:1077.25px;top:794.48px;width:1.5px;height:46.72px;background:#e8e8ec;"></div>
<div class="r" style="left:1236.25px;top:794.48px;width:1.5px;height:46.72px;background:#e8e8ec;"></div>
<div class="r" style="left:1366.55px;top:794.48px;width:1.5px;height:46.72px;background:#e8e8ec;"></div>
<div class="r" style="left:1496.75px;top:794.48px;width:1.5px;height:46.72px;background:#e8e8ec;"></div>
<div class="t" style="left:10.80px;top:805.83px;font-size:26px;color:#767676;font-weight:400;letter-spacing:-1.050px;">1-8</div>
<svg class="r" style="left:242.2px;top:803.6800000000001px" width="30" height="30" viewBox="0 0 30 30"><rect x="0" y="0" width="30" height="30" rx="3.5" fill="#55b073"/><path d="M8.6 7.9 Q8.6 6.6 9.9 6.6 H20.5 Q21.8 6.6 21.8 7.9 V23.6 L15.2 17.3 L8.6 23.6 Z" fill="#fff"/></svg>
<div class="t" style="left:283.60px;top:805.83px;font-size:26px;color:#0f52d0;font-weight:400;letter-spacing:-0.593px;"><span style="text-decoration:line-through;text-decoration-thickness:2px;">As a scrum master, I can s</span><span style="color:#333333">...</span></div>
<div class="t" style="left:811.80px;top:805.83px;font-size:26px;color:#434343;font-weight:400;letter-spacing:0.480px;">Medium</div>
<div class="t" style="left:1415.45px;top:805.83px;font-size:26px;color:#434343;font-weight:400;transform:scaleX(0.8972);transform-origin:0 0;">0%</div>
<div class="r" style="left:0px;top:888.0200000000001px;width:1683px;height:1.5px;background:#ebebef;"></div>
<div class="r" style="left:1709px;top:888.0200000000001px;width:211px;height:1.5px;background:#ebebef;"></div>
<div class="r" style="left:147.25px;top:841.2px;width:1.5px;height:46.72px;background:#e8e8ec;"></div>
<div class="r" style="left:613.25px;top:841.2px;width:1.5px;height:46.72px;background:#e8e8ec;"></div>
<div class="r" style="left:799.95px;top:841.2px;width:1.5px;height:46.72px;background:#e8e8ec;"></div>
<div class="r" style="left:930.25px;top:841.2px;width:1.5px;height:46.72px;background:#e8e8ec;"></div>
<div class="r" style="left:1077.25px;top:841.2px;width:1.5px;height:46.72px;background:#e8e8ec;"></div>
<div class="r" style="left:1236.25px;top:841.2px;width:1.5px;height:46.72px;background:#e8e8ec;"></div>
<div class="r" style="left:1366.55px;top:841.2px;width:1.5px;height:46.72px;background:#e8e8ec;"></div>
<div class="r" style="left:1496.75px;top:841.2px;width:1.5px;height:46.72px;background:#e8e8ec;"></div>
<div class="t" style="left:10.80px;top:852.52px;font-size:26px;color:#767676;font-weight:400;letter-spacing:-0.550px;">1-9</div>
<svg class="r" style="left:242.2px;top:850.4000000000001px" width="30" height="30" viewBox="0 0 30 30"><rect x="0" y="0" width="30" height="30" rx="3.5" fill="#55b073"/><path d="M8.6 7.9 Q8.6 6.6 9.9 6.6 H20.5 Q21.8 6.6 21.8 7.9 V23.6 L15.2 17.3 L8.6 23.6 Z" fill="#fff"/></svg>
<div class="t" style="left:283.60px;top:852.52px;font-size:26px;color:#0f52d0;font-weight:400;letter-spacing:-0.521px;"><span style="text-decoration:line-through;text-decoration-thickness:2px;">As a team, we can finish t</span><span style="color:#333333">...</span></div>
<div class="t" style="left:811.80px;top:852.52px;font-size:26px;color:#434343;font-weight:400;letter-spacing:0.480px;">Medium</div>
<div class="t" style="left:1415.45px;top:852.52px;font-size:26px;color:#434343;font-weight:400;transform:scaleX(0.8972);transform-origin:0 0;">0%</div>
<div class="r" style="left:0px;top:934.74px;width:1683px;height:1.5px;background:#ebebef;"></div>
<div class="r" style="left:1709px;top:934.74px;width:211px;height:1.5px;background:#ebebef;"></div>
<div class="r" style="left:147.25px;top:887.92px;width:1.5px;height:46.72px;background:#e8e8ec;"></div>
<div class="r" style="left:613.25px;top:887.92px;width:1.5px;height:46.72px;background:#e8e8ec;"></div>
<div class="r" style="left:799.95px;top:887.92px;width:1.5px;height:46.72px;background:#e8e8ec;"></div>
<div class="r" style="left:930.25px;top:887.92px;width:1.5px;height:46.72px;background:#e8e8ec;"></div>
<div class="r" style="left:1077.25px;top:887.92px;width:1.5px;height:46.72px;background:#e8e8ec;"></div>
<div class="r" style="left:1236.25px;top:887.92px;width:1.5px;height:46.72px;background:#e8e8ec;"></div>
<div class="r" style="left:1366.55px;top:887.92px;width:1.5px;height:46.72px;background:#e8e8ec;"></div>
<div class="r" style="left:1496.75px;top:887.92px;width:1.5px;height:46.72px;background:#e8e8ec;"></div>
<div class="t" style="left:10.80px;top:899.21px;font-size:26px;color:#767676;font-weight:400;letter-spacing:-0.600px;">1-10</div>
<svg class="r" style="left:244.0px;top:899.2199999999999px" width="27" height="27" viewBox="0 0 27 27"><rect x="1.2" y="1.2" width="24.6" height="24.6" rx="5" fill="#fff" stroke="#8a8a8a" stroke-width="2.3"/><path d="M8.5 7.2 H18.5 M8.5 19.8 H18.5" stroke="#777" stroke-width="2.6"/><path d="M13.5 7 V20" stroke="#777" stroke-width="3.6"/></svg>
<div class="t" style="left:283.60px;top:899.21px;font-size:26px;color:#0f52d0;font-weight:400;letter-spacing:-0.055px;"><span style="text-decoration:line-through;text-decoration-thickness:2px;">Instructions for deleting t</span><span style="color:#333333">...</span></div>
<svg class="r" style="left:625.8px;top:896.7199999999999px" width="31" height="31" viewBox="0 0 31 31"><circle cx="15.5" cy="15.5" r="15.2" fill="#5fc6c6"/><path d="M6.5 25.5 V14 A9 9 0 0 1 24.5 14 V25.5 Q21.5 23.5 18.5 25.5 Q15.5 27 12.5 25.5 Q9.5 23.5 6.5 25.5 Z" fill="#fff"/><circle cx="12.5" cy="15" r="0.9" fill="#999"/><circle cx="18.5" cy="15" r="0.9" fill="#556"/><path d="M12 18.5 H19 Q18 22.5 15.5 23 Q13 22.5 12 18.5 Z" fill="#e0704a"/><path d="M12 18.5 H19 L18.5 20 H12.5 Z" fill="#2848b8"/></svg>
<div class="t" style="left:667.00px;top:899.21px;font-size:26px;color:#434343;font-weight:400;letter-spacing:0.500px;">admin</div>
<div class="t" style="left:811.80px;top:899.21px;font-size:26px;color:#434343;font-weight:400;letter-spacing:0.480px;">Medium</div>
<div class="t" style="left:1415.45px;top:899.21px;font-size:26px;color:#434343;font-weight:400;transform:scaleX(0.8972);transform-origin:0 0;">0%</div>
<div class="t" style="left:1509.00px;top:899.21px;font-size:26px;color:#8c8c8c;font-weight:400;letter-spacing:0.143px;">*To delete t...</div>
<div class="r" style="left:0px;top:981.46px;width:1683px;height:1.5px;background:#ebebef;"></div>
<div class="r" style="left:1709px;top:981.46px;width:211px;height:1.5px;background:#ebebef;"></div>
<div class="r" style="left:147.25px;top:934.64px;width:1.5px;height:46.72px;background:#e8e8ec;"></div>
<div class="r" style="left:613.25px;top:934.64px;width:1.5px;height:46.72px;background:#e8e8ec;"></div>
<div class="r" style="left:799.95px;top:934.64px;width:1.5px;height:46.72px;background:#e8e8ec;"></div>
<div class="r" style="left:930.25px;top:934.64px;width:1.5px;height:46.72px;background:#e8e8ec;"></div>
<div class="r" style="left:1077.25px;top:934.64px;width:1.5px;height:46.72px;background:#e8e8ec;"></div>
<div class="r" style="left:1236.25px;top:934.64px;width:1.5px;height:46.72px;background:#e8e8ec;"></div>
<div class="r" style="left:1366.55px;top:934.64px;width:1.5px;height:46.72px;background:#e8e8ec;"></div>
<div class="r" style="left:1496.75px;top:934.64px;width:1.5px;height:46.72px;background:#e8e8ec;"></div>
<div class="t" style="left:10.80px;top:945.90px;font-size:26px;color:#767676;font-weight:400;letter-spacing:-2.150px;">1-1</div>
<svg class="r" style="left:209.4px;top:957.34px" width="17" height="10" viewBox="0 0 17 10"><path d="M0 0 L17 0 L8.5 9.5 Z" fill="#6a9ee6"/></svg>
<svg class="r" style="left:245.2px;top:945.84px" width="24" height="27" viewBox="0 0 24 27"><path d="M1 8 L12 3 L23 8 L23 21 L12 26 L1 21 Z" fill="#d8a818"/><path d="M1 8 L12 13 L23 8 L12 3 Z" fill="#e9c23c"/><path d="M12 13 L23 8 L23 21 L12 26 Z" fill="#c8961a"/><path d="M6 4 L11 1 L13 4 L9 7 Z" fill="#b8860b"/></svg>
<div class="t" style="left:283.60px;top:945.90px;font-size:26px;color:#0f52d0;font-weight:400;letter-spacing:-0.460px;"><span style="">Version 1.0</span></div>
<div class="t" style="left:1089.00px;top:945.90px;font-size:26px;color:#434343;font-weight:400;letter-spacing:-0.400px;">17/Jun/20</div>
<div class="t" style="left:1400.68px;top:945.90px;font-size:26px;color:#8c8c8c;font-weight:400;transform:scaleX(0.9359);transform-origin:0 0;">100%</div>
<div class="r" style="left:0px;top:1028.1799999999998px;width:1683px;height:1.5px;background:#ebebef;"></div>
<div class="r" style="left:1709px;top:1028.1799999999998px;width:211px;height:1.5px;background:#ebebef;"></div>
<div class="r" style="left:147.25px;top:981.36px;width:1.5px;height:46.72px;background:#e8e8ec;"></div>
<div class="r" style="left:613.25px;top:981.36px;width:1.5px;height:46.72px;background:#e8e8ec;"></div>
<div class="r" style="left:799.95px;top:981.36px;width:1.5px;height:46.72px;background:#e8e8ec;"></div>
<div class="r" style="left:930.25px;top:981.36px;width:1.5px;height:46.72px;background:#e8e8ec;"></div>
<div class="r" style="left:1077.25px;top:981.36px;width:1.5px;height:46.72px;background:#e8e8ec;"></div>
<div class="r" style="left:1236.25px;top:981.36px;width:1.5px;height:46.72px;background:#e8e8ec;"></div>
<div class="r" style="left:1366.55px;top:981.36px;width:1.5px;height:46.72px;background:#e8e8ec;"></div>
<div class="r" style="left:1496.75px;top:981.36px;width:1.5px;height:46.72px;background:#e8e8ec;"></div>
<div class="t" style="left:10.80px;top:992.59px;font-size:26px;color:#767676;font-weight:400;letter-spacing:-1.200px;">1-1-1</div>
<svg class="r" style="left:284.2px;top:990.5600000000001px" width="30" height="30" viewBox="0 0 30 30"><rect x="0" y="0" width="30" height="30" rx="3.5" fill="#55b073"/><path d="M8.6 7.9 Q8.6 6.6 9.9 6.6 H20.5 Q21.8 6.6 21.8 7.9 V23.6 L15.2 17.3 L8.6 23.6 Z" fill="#fff"/></svg>
<div class="t" style="left:324.40px;top:992.59px;font-size:26px;color:#0f52d0;font-weight:400;letter-spacing:-1.048px;"><span style="">As a user, I'd like a histo</span><span style="color:#333333">...</span></div>
<svg class="r" style="left:625.8px;top:990.16px" width="31" height="31" viewBox="0 0 31 31"><circle cx="15.5" cy="15.5" r="15.2" fill="#5fc6c6"/><path d="M6.5 25.5 V14 A9 9 0 0 1 24.5 14 V25.5 Q21.5 23.5 18.5 25.5 Q15.5 27 12.5 25.5 Q9.5 23.5 6.5 25.5 Z" fill="#fff"/><circle cx="12.5" cy="15" r="0.9" fill="#999"/><circle cx="18.5" cy="15" r="0.9" fill="#556"/><path d="M12 18.5 H19 Q18 22.5 15.5 23 Q13 22.5 12 18.5 Z" fill="#e0704a"/><path d="M12 18.5 H19 L18.5 20 H12.5 Z" fill="#2848b8"/></svg>
<div class="t" style="left:667.00px;top:992.59px;font-size:26px;color:#434343;font-weight:400;letter-spacing:0.500px;">admin</div>
<div class="t" style="left:811.80px;top:992.59px;font-size:26px;color:#434343;font-weight:400;letter-spacing:0.480px;">Medium</div>
<div class="t" style="left:1415.45px;top:992.59px;font-size:26px;color:#434343;font-weight:400;transform:scaleX(0.8972);transform-origin:0 0;">0%</div>
<div class="r" style="left:1894.5px;top:374px;width:30px;height:627px;background:#d9fba1;"></div>
<div class="r" style="left:1894.5px;top:420.82000000000005px;width:30px;height:1.5px;background:rgba(255,255,255,0.55);"></div>
<div class="r" style="left:1894.5px;top:467.54px;width:30px;height:1.5px;background:rgba(255,255,255,0.55);"></div>
<div class="r" style="left:1894.5px;top:514.26px;width:30px;height:1.5px;background:rgba(255,255,255,0.55);"></div>
<div class="r" style="left:1894.5px;top:560.98px;width:30px;height:1.5px;background:rgba(255,255,255,0.55);"></div>
<div class="r" style="left:1894.5px;top:607.7px;width:30px;height:1.5px;background:rgba(255,255,255,0.55);"></div>
<div class="r" style="left:1894.5px;top:654.42px;width:30px;height:1.5px;background:rgba(255,255,255,0.55);"></div>
<div class="r" style="left:1894.5px;top:701.14px;width:30px;height:1.5px;background:rgba(255,255,255,0.55);"></div>
<div class="r" style="left:1894.5px;top:747.86px;width:30px;height:1.5px;background:rgba(255,255,255,0.55);"></div>
<div class="r" style="left:1894.5px;top:794.58px;width:30px;height:1.5px;background:rgba(255,255,255,0.55);"></div>
<div class="r" style="left:1894.5px;top:841.3000000000001px;width:30px;height:1.5px;background:rgba(255,255,255,0.55);"></div>
<div class="r" style="left:1894.5px;top:888.02px;width:30px;height:1.5px;background:rgba(255,255,255,0.55);"></div>
<div class="r" style="left:1894.5px;top:934.74px;width:30px;height:1.5px;background:rgba(255,255,255,0.55);"></div>
<div class="r" style="left:1894.5px;top:981.46px;width:30px;height:1.5px;background:rgba(255,255,255,0.55);"></div>
<div class="r" style="left:1894.5px;top:1028.1799999999998px;width:30px;height:1.5px;background:rgba(255,255,255,0.55);"></div>
<div class="r" style="left:1803px;top:374.3px;width:3px;height:10px;background:#8f8f8f;"></div>
<div class="r" style="left:1803px;top:393.0px;width:3px;height:10px;background:#8f8f8f;"></div>
<div class="r" style="left:1803px;top:411.7px;width:3px;height:10px;background:#8f8f8f;"></div>
<div class="r" style="left:1803px;top:430.4px;width:3px;height:10px;background:#8f8f8f;"></div>
<div class="r" style="left:1803px;top:449.1px;width:3px;height:10px;background:#8f8f8f;"></div>
<div class="r" style="left:1803px;top:467.8px;width:3px;height:10px;background:#8f8f8f;"></div>
<div class="r" style="left:1803px;top:486.5px;width:3px;height:10px;background:#8f8f8f;"></div>
<div class="r" style="left:1803px;top:505.20000000000005px;width:3px;height:10px;background:#8f8f8f;"></div>
<div class="r" style="left:1803px;top:523.9px;width:3px;height:10px;background:#8f8f8f;"></div>
<div class="r" style="left:1803px;top:542.6px;width:3px;height:10px;background:#8f8f8f;"></div>
<div class="r" style="left:1803px;top:561.3px;width:3px;height:10px;background:#8f8f8f;"></div>
<div class="r" style="left:1803px;top:580.0px;width:3px;height:10px;background:#8f8f8f;"></div>
<div class="r" style="left:1803px;top:598.7px;width:3px;height:10px;background:#8f8f8f;"></div>
<div class="r" style="left:1803px;top:617.4px;width:3px;height:10px;background:#8f8f8f;"></div>
<div class="r" style="left:1803px;top:636.1px;width:3px;height:10px;background:#8f8f8f;"></div>
<div class="r" style="left:1803px;top:654.8px;width:3px;height:10px;background:#8f8f8f;"></div>
<div class="r" style="left:1803px;top:673.5px;width:3px;height:10px;background:#8f8f8f;"></div>
<div class="r" style="left:1803px;top:692.2px;width:3px;height:10px;background:#8f8f8f;"></div>
<div class="r" style="left:1803px;top:710.9px;width:3px;height:10px;background:#8f8f8f;"></div>
<div class="r" style="left:1803px;top:729.6px;width:3px;height:10px;background:#8f8f8f;"></div>
<div class="r" style="left:1803px;top:748.3px;width:3px;height:10px;background:#8f8f8f;"></div>
<div class="r" style="left:1803px;top:767.0px;width:3px;height:10px;background:#8f8f8f;"></div>
<div class="r" style="left:1803px;top:785.7px;width:3px;height:10px;background:#8f8f8f;"></div>
<div class="r" style="left:1803px;top:804.4px;width:3px;height:10px;background:#8f8f8f;"></div>
<div class="r" style="left:1803px;top:823.0999999999999px;width:3px;height:10px;background:#8f8f8f;"></div>
<div class="r" style="left:1803px;top:841.8px;width:3px;height:10px;background:#8f8f8f;"></div>
<div class="r" style="left:1803px;top:860.5px;width:3px;height:10px;background:#8f8f8f;"></div>
<div class="r" style="left:1803px;top:879.2px;width:3px;height:10px;background:#8f8f8f;"></div>
<div class="r" style="left:1803px;top:897.9000000000001px;width:3px;height:10px;background:#8f8f8f;"></div>
<div class="r" style="left:1803px;top:916.5999999999999px;width:3px;height:10px;background:#8f8f8f;"></div>
<div class="r" style="left:1803px;top:935.3px;width:3px;height:10px;background:#8f8f8f;"></div>
<div class="r" style="left:1803px;top:954.0px;width:3px;height:10px;background:#8f8f8f;"></div>
<div class="r" style="left:1803px;top:972.7px;width:3px;height:10px;background:#8f8f8f;"></div>
<div class="r" style="left:1803px;top:991.4000000000001px;width:3px;height:10px;background:#8f8f8f;"></div>
<svg class="r" style="left:1788px;top:339px" width="30" height="32" viewBox="0 0 30 32"><path d="M15 28 L21.47 20.82 A8.7 8.7 0 1 0 8.53 20.82 Z" fill="#fff" stroke="#ef4040" stroke-width="3.8" stroke-linejoin="miter"/></svg>
<div class="r" style="left:1784px;top:430.5px;width:74.5px;height:15px;background:#659ee3;"></div>
<div class="r" style="left:1709px;top:477.7px;width:211px;height:12.3px;background:#5bcd5f;box-shadow:0 1px 2px rgba(0,0,0,0.08)"></div>
<div class="r" style="left:1709px;top:524px;width:211px;height:12.5px;background:#5bcd5f;box-shadow:0 1px 2px rgba(0,0,0,0.08)"></div>
<div class="r" style="left:1709px;top:571.2px;width:211px;height:13.8px;background:#659ee3;"></div>
<svg class="r" style="left:810.5px;top:232.5px" width="26" height="34" viewBox="0 0 26 34"><path d="M4 3 V23.5 L8.1 19.3 L12.5 29 L16 27.5 L11.8 18.2 H18.8 Z" fill="#000" stroke="#fff" stroke-width="1.7" stroke-linejoin="round" style="filter:drop-shadow(0 1px 1.5px rgba(0,0,0,0.35))"/></svg>
</body></html>
